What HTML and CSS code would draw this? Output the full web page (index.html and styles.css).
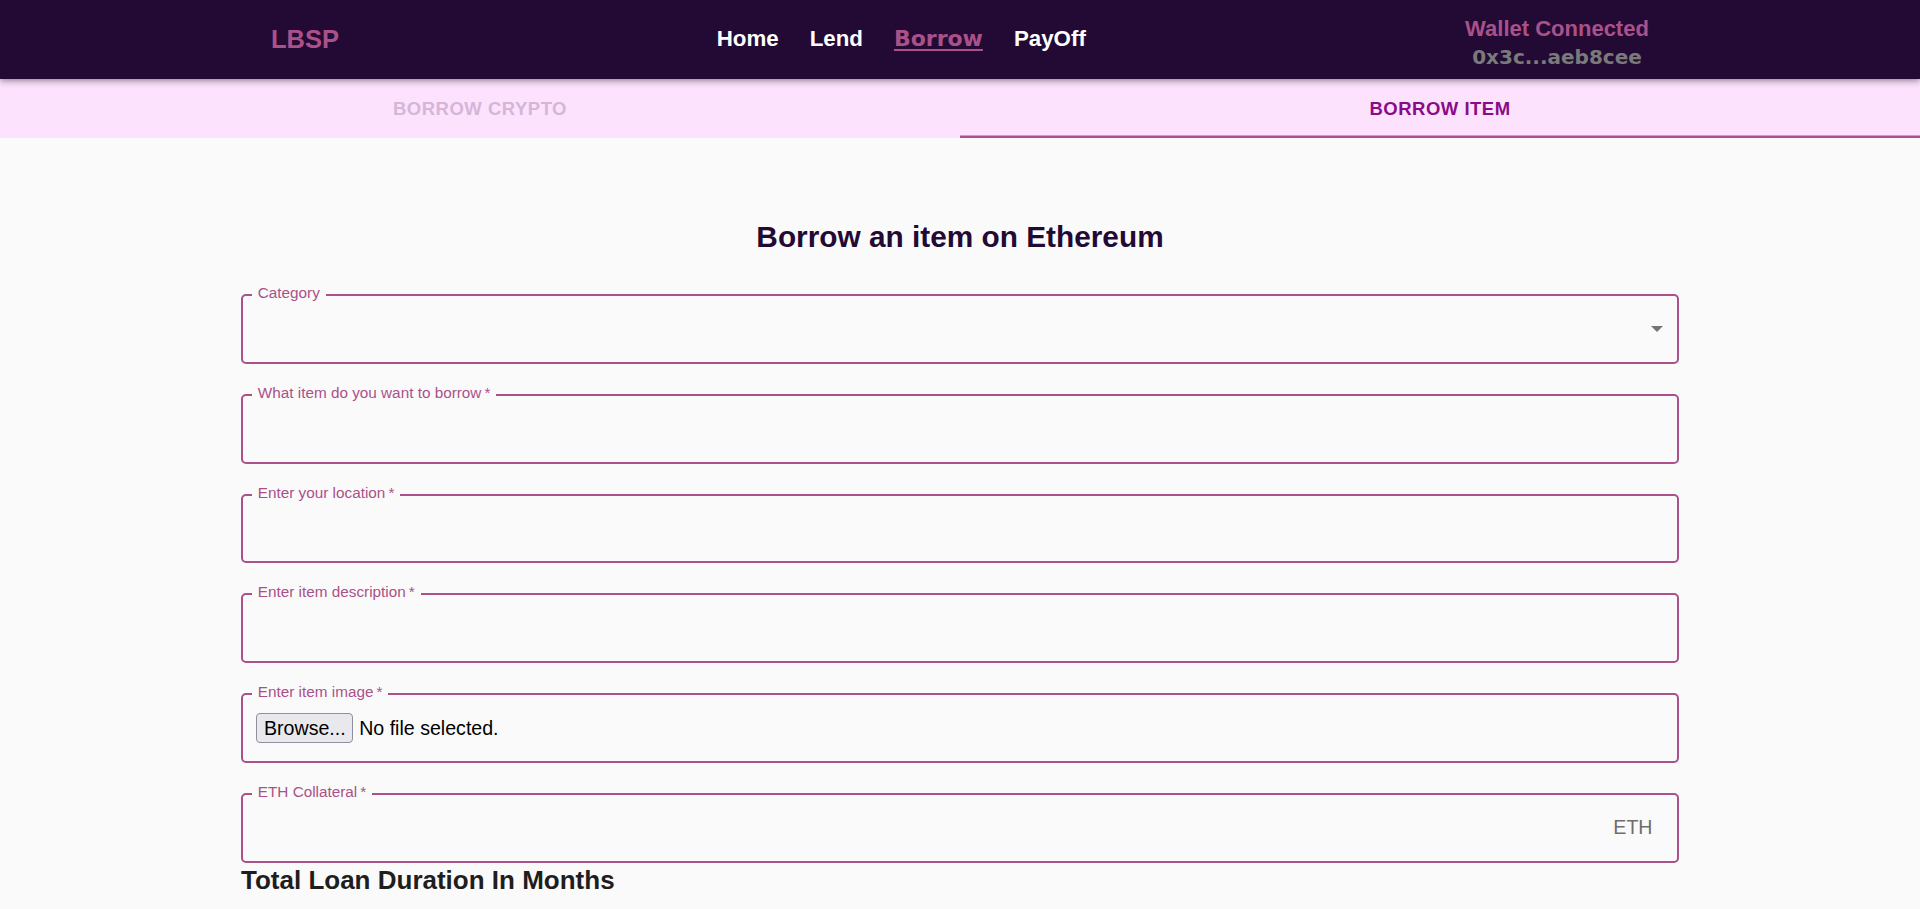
FILE: index.html
```html
<!DOCTYPE html>
<html lang="en">
<head>
<meta charset="utf-8">
<title>LBSP - Borrow</title>
<link rel="stylesheet" href="styles.css">
</head>
<body>
<header class="appbar">
  <div class="logo">LBSP</div>
  <nav class="nav">
    <a class="nav-link" href="#">Home</a>
    <a class="nav-link" href="#">Lend</a>
    <a class="nav-link active" href="#">Borrow</a>
    <a class="nav-link" href="#">PayOff</a>
  </nav>
  <div class="wallet">
    <div class="wallet-status">Wallet Connected</div>
    <div class="wallet-address">0x3c...aeb8cee</div>
  </div>
</header>
<div class="tabs">
  <div class="tab">Borrow Crypto</div>
  <div class="tab active">Borrow Item</div>
</div>
<main class="page">
  <h2 class="title">Borrow an item on Ethereum</h2>
  <form class="form">
    <fieldset class="field">
      <legend>Category</legend>
      <div class="control select">
        <svg class="arrow" width="12" height="6" viewBox="0 0 12 6"><path d="M0 0L6 6L12 0Z" fill="#757575"/></svg>
      </div>
    </fieldset>
    <fieldset class="field">
      <legend>What item do you want to borrow&thinsp;*</legend>
      <div class="control"></div>
    </fieldset>
    <fieldset class="field">
      <legend>Enter your location&thinsp;*</legend>
      <div class="control"></div>
    </fieldset>
    <fieldset class="field">
      <legend>Enter item description&thinsp;*</legend>
      <div class="control"></div>
    </fieldset>
    <fieldset class="field">
      <legend>Enter item image&thinsp;*</legend>
      <div class="control">
        <button type="button" class="browse">Browse...</button>
        <span class="file-name">No file selected.</span>
      </div>
    </fieldset>
    <fieldset class="field">
      <legend>ETH Collateral&thinsp;*</legend>
      <div class="control adorn">ETH</div>
    </fieldset>
    <h3 class="subtitle">Total Loan Duration In Months</h3>
  </form>
</main>
</body>
</html>
```

FILE: styles.css
```css
html, body {
  margin: 0;
  padding: 0;
}

body {
  background: #fafafa;
  font-family: "Liberation Sans", Arial, sans-serif;
  color: #000;
}

.appbar {
  position: relative;
  z-index: 1;
  display: flex;
  align-items: center;
  box-sizing: border-box;
  height: 79px;
  padding: 0 263px 0 271px;
  background: #230a35;
  box-shadow: 0 2px 4px -1px rgba(0, 0, 0, 0.2), 0 4px 5px 0 rgba(0, 0, 0, 0.14), 0 1px 10px 0 rgba(0, 0, 0, 0.12);
}

.logo {
  flex: none;
  width: 445.7px;
  font-size: 25.5px;
  font-weight: 700;
  color: #aa5189;
}

.nav {
  display: flex;
  align-items: baseline;
  gap: 31px;
  padding-bottom: 2px;
}

.nav-link {
  font-size: 22.3px;
  font-weight: 700;
  color: #ffffff;
  text-decoration: none;
}

.nav-link.active {
  font-family: "DejaVu Sans", sans-serif;
  font-size: 22px;
  color: #aa5189;
  text-decoration: underline;
  text-decoration-thickness: 1.5px;
  text-underline-offset: 3px;
}

.wallet {
  margin-left: auto;
  width: 200px;
  padding-top: 6px;
  text-align: center;
}

.wallet-status {
  font-size: 22px;
  font-weight: 700;
  line-height: 28px;
  color: #aa5189;
}

.wallet-address {
  font-family: "DejaVu Sans", sans-serif;
  font-size: 20px;
  font-weight: 700;
  line-height: 28px;
  color: #7a7a7a;
}

.tabs {
  display: flex;
  height: 59px;
  background: #fde2fe;
}

.tab {
  flex: 1;
  display: flex;
  align-items: center;
  justify-content: center;
  padding-top: 1px;
  font-size: 18.5px;
  font-weight: 700;
  letter-spacing: 0.5px;
  text-transform: uppercase;
  color: #d5b6d8;
}

.tab.active {
  color: #8a0b88;
  box-shadow: inset 0 -2.5px 0 #aa5189;
}

.page {
  padding-top: 80.5px;
}

.title {
  margin: 0 0 30.8px;
  font-size: 29.8px;
  line-height: 35.8px;
  font-weight: 700;
  text-align: center;
  color: #230a35;
}

.form {
  width: 1438px;
  margin: 0 auto;
}

.field {
  box-sizing: border-box;
  display: flex;
  align-items: center;
  min-width: 0;
  height: 78.85px;
  margin: 0 0 20.9px;
  padding: 0 0 8.75px 8.8px;
  border: 2.5px solid #aa5189;
  border-radius: 5px;
}

.field legend {
  margin: 0;
  padding: 0 6px 5px;
  font-size: 15.3px;
  line-height: 15px;
  color: #aa5189;
}

.control {
  flex: 1;
  display: flex;
  align-items: center;
  padding-left: 4.7px;
  min-height: 30px;
}

.control.select {
  justify-content: flex-end;
  padding-right: 14.5px;
}

.control.adorn {
  justify-content: flex-end;
  padding-right: 24.5px;
  font-size: 19.6px;
  color: #6e6e6e;
}

.browse {
  box-sizing: border-box;
  height: 30px;
  margin: 0 6px 0 0;
  padding: 0 6.5px;
  border: 1px solid #8f8f9d;
  border-radius: 4px;
  background: #e9e9ed;
  font-family: "Liberation Sans", Arial, sans-serif;
  font-size: 19.6px;
  color: #000;
}

.file-name {
  font-size: 19.6px;
  color: #000;
}

.subtitle {
  margin: 2.5px 0 0;
  font-size: 26px;
  line-height: 31px;
  font-weight: 700;
  color: #1e1e1e;
}

.field:nth-last-of-type(1) {
  margin-bottom: 0;
}
```
